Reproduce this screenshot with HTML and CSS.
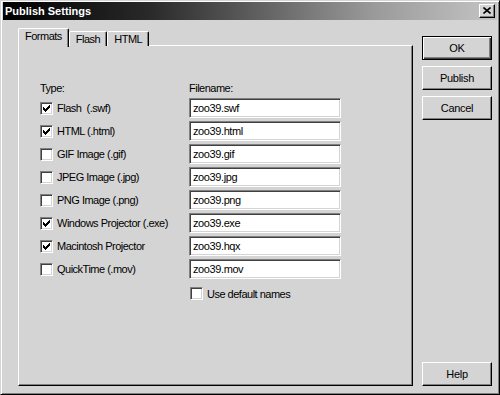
FILE: index.html
```html
<!DOCTYPE html>
<html>
<head>
<meta charset="utf-8">
<link rel="stylesheet" href="styles.css">
</head>
<body>
<div class="window">
  <div class="titlebar">
    <span class="title">Publish Settings</span>
    <span class="close"><svg width="8" height="7" viewBox="0 0 8 7"><path d="M0.5 0.5 L7.5 6.5 M7.5 0.5 L0.5 6.5" stroke="#000" stroke-width="1.6" fill="none"/></svg></span>
  </div>
  <div class="content">
    <div class="tabarea">
      <div class="tabs">
        <div class="tab active">Formats</div>
        <div class="tab">Flash</div>
        <div class="tab">HTML</div>
      </div>
      <div class="panel">
        <div class="grid">
          <div class="hdr">Type:</div>
          <div class="hdr">Filename:</div>

          <label class="chk"><span class="box on"></span>Flash&nbsp; (.swf)</label>
          <div class="input">zoo39.swf</div>

          <label class="chk"><span class="box on"></span>HTML (.html)</label>
          <div class="input">zoo39.html</div>

          <label class="chk"><span class="box"></span>GIF Image (.gif)</label>
          <div class="input">zoo39.gif</div>

          <label class="chk"><span class="box"></span>JPEG Image (.jpg)</label>
          <div class="input">zoo39.jpg</div>

          <label class="chk"><span class="box"></span>PNG Image (.png)</label>
          <div class="input">zoo39.png</div>

          <label class="chk"><span class="box on"></span>Windows Projector (.exe)</label>
          <div class="input">zoo39.exe</div>

          <label class="chk"><span class="box on"></span>Macintosh Projector</label>
          <div class="input">zoo39.hqx</div>

          <label class="chk"><span class="box"></span>QuickTime (.mov)</label>
          <div class="input">zoo39.mov</div>

          <div></div>
          <label class="chk default"><span class="box"></span>Use default names</label>
        </div>
      </div>
    </div>
    <div class="buttons">
      <div class="btn default-btn">OK</div>
      <div class="btn">Publish</div>
      <div class="btn">Cancel</div>
      <div class="btn help">Help</div>
    </div>
  </div>
</div>
</body>
</html>
```

FILE: styles.css
```css
html, body {
  margin: 0;
  padding: 0;
  background: #d4d4d4;
}
body {
  font-family: "Liberation Sans", Arial, sans-serif;
  font-size: 11px;
  color: #000;
}
.window {
  width: 500px;
  height: 395px;
  box-sizing: border-box;
  background: #d4d4d4;
  border: 1px solid;
  border-color: #d4d4d4 #000 #000 #d4d4d4;
  box-shadow: inset 1px 1px #fff, inset -1px -1px #808080;
  padding: 1px 2px 2px 2px;
  display: flex;
  flex-direction: column;
}
.titlebar {
  height: 18px;
  background: linear-gradient(to right, #000 0%, #2a2a2a 30%, #9a9a9a 75%, #c4c4c4 100%);
  display: flex;
  align-items: center;
  justify-content: space-between;
  padding: 0 2px 0 2px;
}
.title {
  color: #fff;
  font-weight: bold;
  font-size: 11px;
}
.close {
  width: 14px;
  height: 12px;
  background: #d4d4d4;
  border: 1px solid;
  border-color: #fff #000 #000 #fff;
  box-shadow: inset -1px -1px #808080;
  display: flex;
  align-items: center;
  justify-content: center;
}
.close svg { display: block; margin-left: -1px; margin-top: -1px; }
.content {
  display: flex;
  padding: 8px 0 0 15px;
  height: 358px;
}
.tabarea {
  width: 395px;
  display: flex;
  flex-direction: column;
}
.tabs {
  display: flex;
  align-items: flex-end;
  height: 18px;
  margin-bottom: -1px;
  position: relative;
  z-index: 1;
}
.tab {
  height: 15px;
  box-sizing: border-box;
  border: 1px solid;
  border-bottom: none;
  border-color: #fff #000 transparent #fff;
  box-shadow: inset -1px 0 #808080;
  border-radius: 2px 2px 0 0;
  padding: 1px 6px 0 6px;
  letter-spacing: -0.5px;
  background: #d4d4d4;
}
.tab.active {
  height: 19px;
  padding: 1px 6px 0 6px;
  margin-bottom: -1px;
  border-bottom: none;
}
.panel {
  flex: 1;
  box-sizing: border-box;
  border: 1px solid;
  border-color: #fff #000 #000 #fff;
  box-shadow: inset -1px -1px #808080;
  padding: 35px 0 0 21px;
}
.grid {
  display: grid;
  grid-template-columns: 149px 152px;
  grid-auto-rows: 20px;
  row-gap: 3px;
  grid-template-rows: 14px;
}
.hdr {
  letter-spacing: -0.5px;
  line-height: 14px;
}
.chk {
  display: flex;
  align-items: center;
  letter-spacing: -0.5px;
  white-space: nowrap;
}
.chk.default {
  margin-top: 5px;
  height: 13px;
  margin-left: 1px;
}
.box {
  width: 13px;
  height: 13px;
  box-sizing: border-box;
  background: #fff;
  border: 1px solid;
  border-color: #808080 #fff #fff #808080;
  box-shadow: inset 1px 1px #404040, inset -1px -1px #d4d4d4;
  margin-right: 4px;
  flex: none;
  position: relative;
}
.box.on::after {
  content: "";
  position: absolute;
  left: 2px;
  top: 2px;
  width: 7px;
  height: 7px;
  background: url("data:image/svg+xml;utf8,<svg xmlns='http://www.w3.org/2000/svg' width='7' height='7' viewBox='0 0 7 7' shape-rendering='crispEdges'><path d='M0 2h1v3h-1zM1 3h1v3h-1zM2 4h1v3h-1zM3 3h1v3h-1zM4 2h1v3h-1zM5 1h1v3h-1zM6 0h1v3h-1z' fill='black'/></svg>") no-repeat;
}
.input {
  box-sizing: border-box;
  height: 20px;
  width: 152px;
  background: #fff;
  border: 1px solid;
  border-color: #808080 #fff #fff #808080;
  box-shadow: inset 1px 1px #404040, inset -1px -1px #d4d4d4;
  padding: 0 0 0 3px;
  line-height: 18px;
  letter-spacing: -0.4px;
}
.buttons {
  display: flex;
  flex-direction: column;
  margin-left: 9px;
  width: 70px;
  padding-top: 8px;
  gap: 6px;
}
.btn {
  height: 24px;
  box-sizing: border-box;
  border: 1px solid;
  border-color: #fff #000 #000 #fff;
  box-shadow: inset -1px -1px #808080;
  display: flex;
  align-items: center;
  justify-content: center;
  letter-spacing: -0.3px;
}
.btn.default-btn {
  border: 1px solid #000;
  box-shadow: inset 1px 1px #fff, inset -1px -1px #404040, inset -2px -2px #808080;
}
.btn.help {
  margin-top: auto;
}
```
